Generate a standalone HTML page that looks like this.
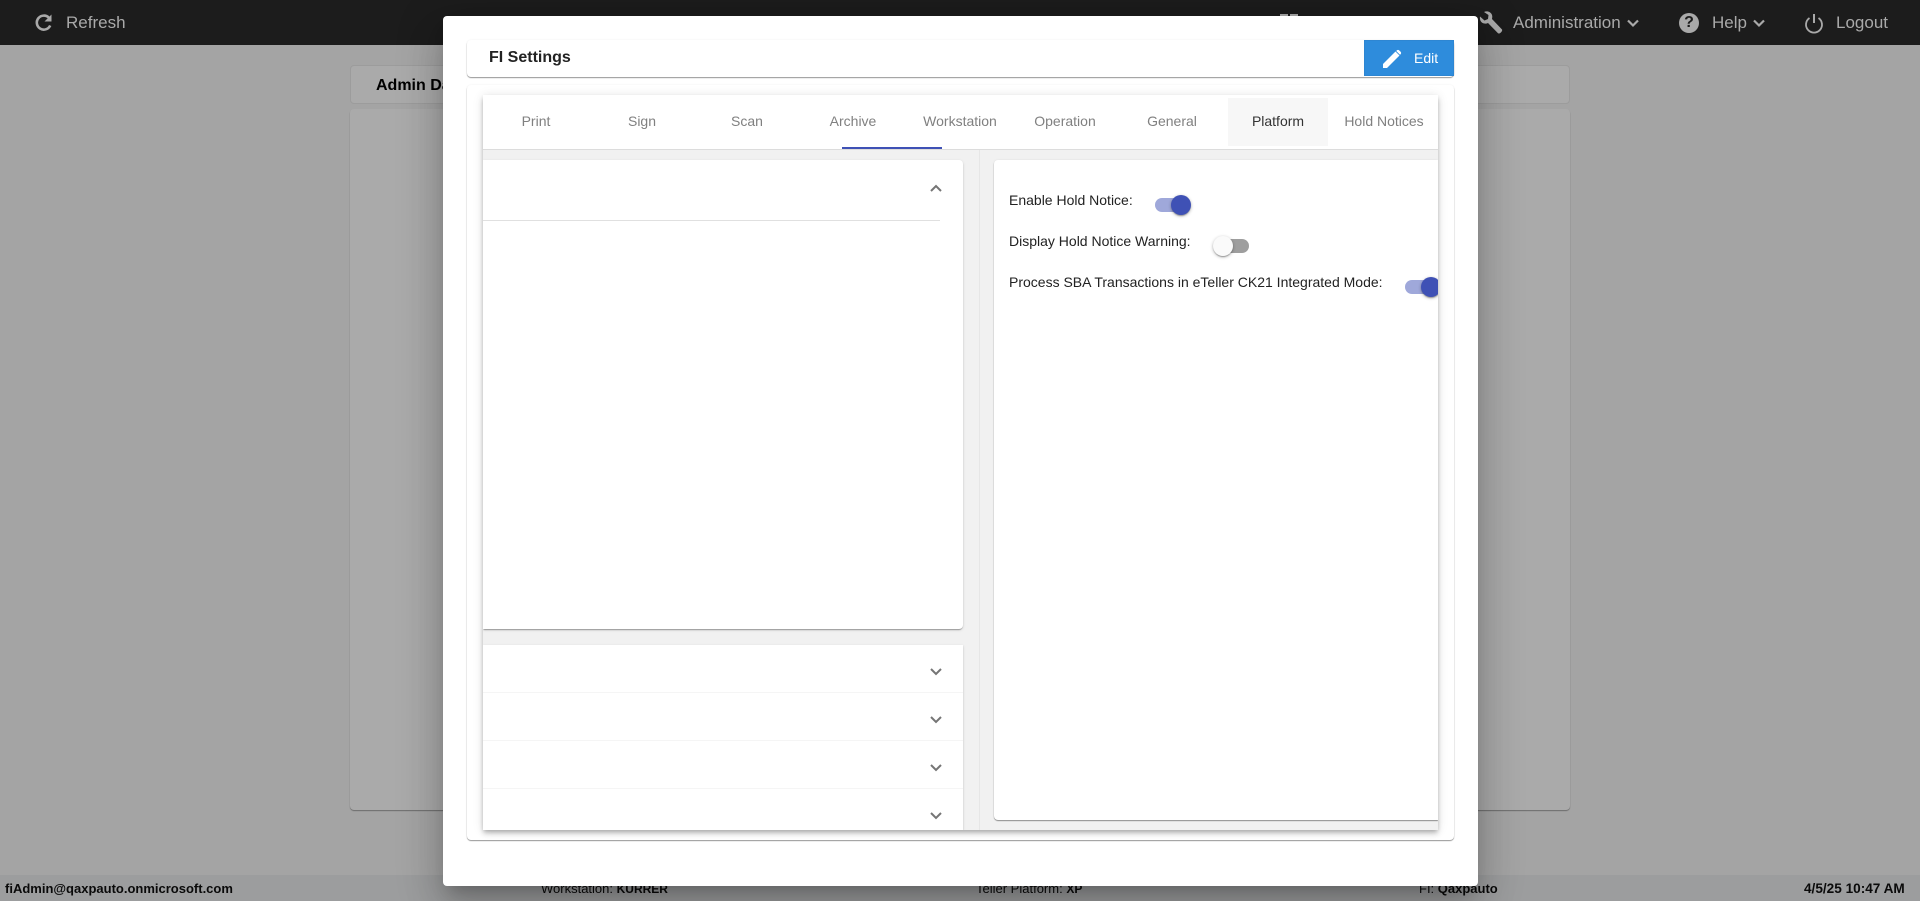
<!DOCTYPE html>
<html><head><meta charset="utf-8"><title>FI Settings</title>
<style>
html,body{margin:0;padding:0;width:1920px;height:901px;overflow:hidden;background:#a4a4a4;font-family:"Liberation Sans",sans-serif}
div,span,svg{position:absolute;box-sizing:border-box}
.t{white-space:nowrap}
.hd{font-size:17px;color:#a9a9a9;line-height:20px;top:13px}
.tab{top:111px;width:106px;text-align:center;font-size:14px;line-height:20px;color:#808080}
.lb{left:1009px;font-size:14px;line-height:18px;color:#222;white-space:nowrap}
.ft{top:881px;font-size:13px;line-height:16px;color:#0a0a0a;white-space:nowrap}
.ft b{font-weight:bold}
.thumb{width:20px;height:20px;border-radius:50%;box-shadow:0 1px 3px rgba(0,0,0,.3),0 1px 1px rgba(0,0,0,.14),0 2px 1px -1px rgba(0,0,0,.12)}
.tr{width:34px;height:14px;border-radius:7px}
.chev{left:928px;width:16px;height:10px}
</style></head><body>

<div style="left:0;top:0;width:1920px;height:45px;background:#1c1c1c"></div>
<svg style="left:34px;top:13px" width="20" height="20" viewBox="0 0 20 20"><path d="M16.200 12.500A7 7 0 1 1 15 4.900" fill="none" stroke="#a9a9a9" stroke-width="2.600"/><path d="M17.500 1.500V8.500H10.500Z" fill="#a9a9a9"/></svg>
<div class="hd t" style="left:66px">Refresh</div>
<svg style="left:1280px;top:13px" width="18" height="4"><rect x="0" y="1" width="8" height="3" fill="#a9a9a9"/><rect x="10" y="1" width="8" height="3" fill="#a9a9a9"/></svg>
<svg style="left:1479px;top:11px" width="24" height="23" viewBox="0 0 24 23"><path d="M1 5.500L5.500 9.500 9 8 9.500 4 5 1C8 -.5 12 .8 13 4 13.600 6 13 7.200 13 8L23 18.500C24 20 20.500 23.500 19 22.300L9 12C7.500 12.800 5 13 3.200 11.800 1.300 10.500 .6 8 1 5.500Z" fill="#a9a9a9"/></svg>
<div class="hd t" style="left:1513px">Administration</div>
<svg style="left:1627px;top:19px" width="12" height="9" viewBox="0 0 12 9"><path d="M1 1.500L6 6.500 11 1.500" fill="none" stroke="#a9a9a9" stroke-width="2.200"/></svg>
<div style="left:1679px;top:13px;width:20px;height:20px;border-radius:50%;background:#a9a9a9"></div>
<div class="t" style="left:1679px;top:13px;width:20px;text-align:center;font-size:16px;font-weight:bold;line-height:20px;color:#1c1c1c">?</div>
<div class="hd t" style="left:1712px">Help</div>
<svg style="left:1753px;top:19px" width="12" height="9" viewBox="0 0 12 9"><path d="M1 1.500L6 6.500 11 1.500" fill="none" stroke="#a9a9a9" stroke-width="2.200"/></svg>
<svg style="left:1804px;top:13px" width="20" height="21" viewBox="0 0 20 21"><path d="M5.500 5A8 8 0 1 0 14.500 5" fill="none" stroke="#a9a9a9" stroke-width="1.800"/><path d="M10 1V10" stroke="#a9a9a9" stroke-width="2"/></svg>
<div class="hd t" style="left:1836px">Logout</div>

<div style="left:350px;top:65px;width:1220px;height:39px;background:#aaa;border-radius:4px;border:1px solid #9c9c9c"></div>
<div class="t" style="left:376px;top:76px;font-size:16px;font-weight:bold;line-height:20px;color:#000">Admin Dashboard</div>
<div style="left:350px;top:109px;width:1220px;height:701px;background:#aaa;border-radius:4px;box-shadow:0 1px 1px rgba(0,0,0,.35)"></div>

<div style="left:0;top:875px;width:1920px;height:26px;background:#9c9d9e"></div>
<div class="ft" style="left:5px;font-weight:bold">fiAdmin@qaxpauto.onmicrosoft.com</div>
<div class="ft" style="left:541px">Workstation: <b style="font-size:12px">KURRER</b></div>
<div class="ft" style="left:976px">Teller Platform: <b style="font-size:12px">XP</b></div>
<div class="ft" style="left:1419px">FI: <b>Qaxpauto</b></div>
<div class="ft" style="left:1804px;font-weight:bold;font-size:13.600px">4/5/25 10:47 AM</div>

<div style="left:443px;top:16px;width:1035px;height:870px;background:#fff;border-radius:4px;box-shadow:0 11px 15px -7px rgba(0,0,0,.2),0 24px 38px 3px rgba(0,0,0,.14),0 9px 46px 8px rgba(0,0,0,.12)"></div>

<div style="left:467px;top:40px;width:987px;height:37px;background:#fff;border-radius:4px;box-shadow:0 1px 1px rgba(0,0,0,.4),0 0 2px rgba(0,0,0,.06)"></div>
<div class="t" style="left:489px;top:48px;font-size:16px;font-weight:bold;line-height:20px;color:#222">FI Settings</div>
<div style="left:1364px;top:40px;width:90px;height:36px;background:#2e8cdc;border:1px solid #2e86d2"></div>
<svg style="left:1382px;top:49px" width="20" height="20" viewBox="0 0 20 20"><path d="M1 15L13.500 2.500 17.500 6.500 5 19H1Z M14.800 1.400C15.500 .7 16.500 .7 17.200 1.400L18.600 2.800C19.300 3.500 19.300 4.500 18.600 5.200L18 5.800 14.200 2Z" fill="#fff"/></svg>
<div class="t" style="left:1414px;top:48px;font-size:14px;line-height:20px;color:#fff">Edit</div>

<div style="left:467px;top:85px;width:987px;height:755px;background:#fff;border-radius:4px;box-shadow:0 1px 1px rgba(0,0,0,.4),0 0 2px rgba(0,0,0,.06)"></div>

<div style="left:483px;top:95px;width:955px;height:735px;background:#f1f1f1;box-shadow:0 2px 4px -1px rgba(0,0,0,.2),0 4px 5px 0 rgba(0,0,0,.14),0 1px 10px 0 rgba(0,0,0,.12)"></div>
<div style="left:483px;top:95px;width:955px;height:54px;background:#fff"></div>
<div style="left:483px;top:149px;width:955px;height:1px;background:#dcdcdc"></div>
<div style="left:1228px;top:98px;width:100px;height:48px;background:#f7f7f7"></div>
<div style="left:842px;top:147px;width:100px;height:2px;background:#3f51b5"></div>
<div class="tab t" style="left:483px">Print</div>
<div class="tab t" style="left:589px">Sign</div>
<div class="tab t" style="left:694px">Scan</div>
<div class="tab t" style="left:800px">Archive</div>
<div class="tab t" style="left:907px">Workstation</div>
<div class="tab t" style="left:1012px">Operation</div>
<div class="tab t" style="left:1119px">General</div>
<div class="tab t" style="left:1225px;color:#333">Platform</div>
<div class="tab t" style="left:1331px">Hold Notices</div>

<div style="left:979px;top:150px;width:1px;height:680px;background:#e6e6e6"></div>

<div style="left:483px;top:160px;width:480px;height:469px;background:#fff;border-radius:0 4px 4px 0;box-shadow:0 2px 1px -1px rgba(0,0,0,.2),0 1px 1px 0 rgba(0,0,0,.14),0 1px 3px 0 rgba(0,0,0,.12);clip-path:inset(-4px -4px -4px 0)"></div>
<svg class="chev" style="top:183px" viewBox="0 0 16 10"><path d="M3 8L8 3 13 8" fill="none" stroke="#757575" stroke-width="2"/></svg>
<div style="left:483px;top:220px;width:457px;height:1px;background:#e0e0e0"></div>

<div style="left:483px;top:645px;width:480px;height:185px;background:#fff;box-shadow:0 2px 1px -1px rgba(0,0,0,.2),0 1px 1px 0 rgba(0,0,0,.14),0 1px 3px 0 rgba(0,0,0,.12);clip-path:inset(-4px -4px 0 0)"></div>
<div style="left:483px;top:692px;width:480px;height:1px;background:#f5f5f5"></div>
<div style="left:483px;top:740px;width:480px;height:1px;background:#f5f5f5"></div>
<div style="left:483px;top:788px;width:480px;height:1px;background:#f5f5f5"></div>
<svg class="chev" style="top:667px" viewBox="0 0 16 10"><path d="M3 2L8 7 13 2" fill="none" stroke="#757575" stroke-width="2"/></svg>
<svg class="chev" style="top:715px" viewBox="0 0 16 10"><path d="M3 2L8 7 13 2" fill="none" stroke="#757575" stroke-width="2"/></svg>
<svg class="chev" style="top:763px" viewBox="0 0 16 10"><path d="M3 2L8 7 13 2" fill="none" stroke="#757575" stroke-width="2"/></svg>
<svg class="chev" style="top:811px" viewBox="0 0 16 10"><path d="M3 2L8 7 13 2" fill="none" stroke="#757575" stroke-width="2"/></svg>

<div style="left:994px;top:160px;width:444px;height:660px;background:#fff;border-radius:4px 0 0 4px;box-shadow:0 1px 1px rgba(0,0,0,.4),0 0 2px rgba(0,0,0,.08);clip-path:inset(-4px 0 -4px -4px)"></div>

<div class="lb" style="top:191px">Enable Hold Notice:</div>
<div class="tr" style="left:1155px;top:198px;background:#9fa8da"></div>
<div class="thumb" style="left:1171px;top:195px;background:#3f51b5"></div>

<div class="lb" style="top:232px">Display Hold Notice Warning:</div>
<div class="tr" style="left:1215px;top:239px;background:#9e9e9e"></div>
<div class="thumb" style="left:1213px;top:236px;background:#fafafa"></div>

<div class="lb" style="top:273px">Process SBA Transactions in eTeller CK21 Integrated Mode:</div>
<div style="left:1400px;top:270px;width:38px;height:36px;overflow:hidden">
<div class="tr" style="left:5px;top:10px;background:#9fa8da"></div>
<div class="thumb" style="left:21px;top:7px;background:#3f51b5"></div>
</div>
</body></html>
